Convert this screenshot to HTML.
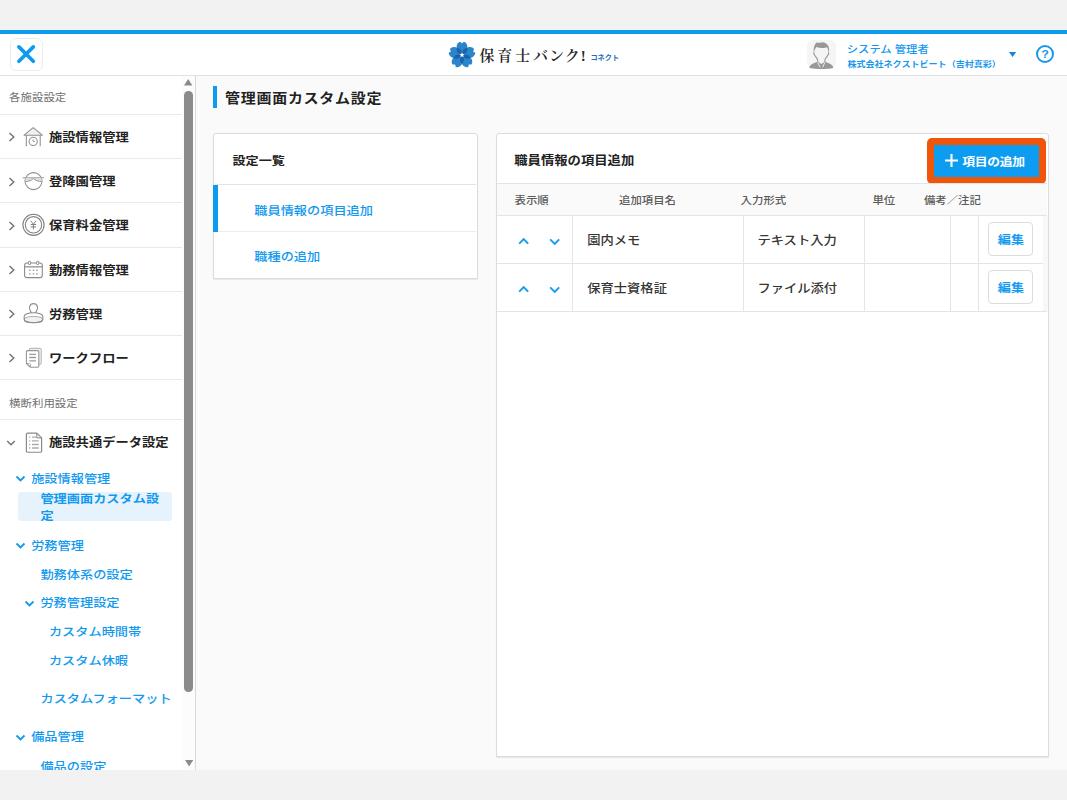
<!DOCTYPE html>
<html lang="ja">
<head>
<meta charset="utf-8">
<title>管理画面カスタム設定 | 保育士バンク! コネクト</title>
<style>
*{box-sizing:border-box;margin:0;padding:0}
html,body{width:1067px;height:800px;overflow:hidden;background:#f2f2f2}
body{position:relative;font-family:"Liberation Sans","Noto Sans CJK JP",sans-serif;color:#222;-webkit-font-smoothing:antialiased}
.abs{position:absolute}
.t{position:absolute;white-space:nowrap;line-height:1}
.t,.sec,.mi,.bl,.th,.td{transform:scaleY(.9);transform-origin:50% 45%}
.edit span{display:inline-block;transform:scaleY(.9);transform-origin:50% 45%}
#app{position:absolute;left:0;top:30px;width:1067px;height:740px;background:#fafafa;overflow:hidden}
#w{position:absolute;left:0;top:-30px;width:1067px;height:800px}
#topbar{position:absolute;left:0;top:30px;width:1067px;height:3.6px;background:#0c9bee}
#header{position:absolute;left:0;top:33.6px;width:1067px;height:42.4px;background:#fff;border-bottom:1px solid #e0e0e0}
#side{position:absolute;left:0;top:76px;width:196px;height:694px;background:#fff;border-right:1px solid #d9d9d9}
.sdiv{position:absolute;left:0;width:182px;height:1px;background:#eaeaea}
.sec{position:absolute;left:9.1px;font-size:11.45px;color:#707070;white-space:nowrap;line-height:1}
.mi{position:absolute;left:49px;font-size:13.3px;font-weight:700;color:#222;white-space:nowrap;line-height:1}
.bl{position:absolute;font-size:13.2px;font-weight:500;color:#1199f0;white-space:nowrap;line-height:1}
.card{position:absolute;background:#fff;border:1px solid #dcdcdc;border-radius:3px 3px 1px 1px;box-shadow:0 1px 1px rgba(0,0,0,.08)}
.hl{position:absolute;height:1px;background:#e4e4e4}
.vl{position:absolute;width:1px;background:#e4e4e4}
.th{position:absolute;font-size:11.4px;font-weight:500;color:#5a5a5a;white-space:nowrap;line-height:1;top:194.6px}
.td{position:absolute;font-size:13.3px;font-weight:500;color:#363636;white-space:nowrap;line-height:1}
.edit{position:absolute;left:988.3px;width:45.2px;height:34.2px;border:1px solid #dcdcdc;border-radius:4px;background:#fff;color:#149bf1;font-weight:700;font-size:13.1px;line-height:32px;padding-top:2.2px;text-align:center}
</style>
</head>
<body>
<div id="app"><div id="w">
  <div id="topbar"></div>

  <!-- ===== header ===== -->
  <div id="header"></div>
  <!-- close button -->
  <div class="abs" style="left:9.5px;top:37.5px;width:33.5px;height:33.5px;border:1.8px solid #ececec;border-radius:6px;background:#fff"></div>
  <svg class="abs" style="left:14px;top:41.7px" width="24" height="24" viewBox="0 0 24 24"><path d="M4.9 4.9 L19.300 19.300 M19.300 4.9 L4.9 19.300" stroke="#0c9bee" stroke-width="3.7" stroke-linecap="round" fill="none"/></svg>

  <!-- logo -->
  <svg class="abs" style="left:447.65px;top:41.1px" width="28" height="28" viewBox="-14 -14 28 28">
    <g fill="#2a86c9">
      <g id="ptl"><path d="M0 0 C-3 -1.600 -6 -4.800 -5.300 -9.200 C-4.900 -11.400 -3.400 -12.900 -2 -13.300 L0 -11.700 L2 -13.300 C3.400 -12.900 4.900 -11.400 5.300 -9.200 C6 -4.800 3 -1.600 0 0Z"/></g>
      <use href="#ptl" transform="rotate(72)"/><use href="#ptl" transform="rotate(144)"/><use href="#ptl" transform="rotate(216)"/><use href="#ptl" transform="rotate(288)"/>
    </g>
    <g fill="#1b61ae">
      <defs><path id="ptm" d="M0 -1.300 C-2.800 -3.500 -2.700 -6.300 0 -8.800 C2.700 -6.300 2.800 -3.500 0 -1.300Z"/></defs>
      <use href="#ptm" transform="rotate(36)"/><use href="#ptm" transform="rotate(108)"/><use href="#ptm" transform="rotate(180)"/><use href="#ptm" transform="rotate(252)"/><use href="#ptm" transform="rotate(324)"/>
    </g>
    <path d="M0 -2.600 L0.700 -0.900 L2.470 -0.800 L1.100 0.350 L1.530 2.100 L0 1.150 L-1.530 2.100 L-1.100 0.350 L-2.470 -0.800 L-0.700 -0.900Z" fill="#fff"/>
  </svg>
  <div class="t" style="transform:none;left:479.4px;top:49.3px;font-family:'Liberation Serif','Noto Serif CJK SC',serif;font-size:15px;font-weight:600;color:#262626"><span style="letter-spacing:2.9px">保育士</span><span style="letter-spacing:1px">バンク</span>!</div>
  <div class="t" style="transform:none;left:590.4px;top:53.800px;font-size:7.2px;font-weight:700;color:#2a6fb5">コネクト</div>

  <!-- user -->
  <div class="abs" style="left:806.75px;top:39.8px;width:29.3px;height:29.5px;border-radius:6px;background:#f5f5f5;overflow:hidden">
    <svg width="29.3" height="29.5" viewBox="0 0 29.3 29.5">
      <path d="M6.800 13.400 C6.300 9 6.900 4.800 9.500 2.400 C11 2.900 12.500 2.700 14.500 2.400 C18.500 1.800 21.800 5 22.100 9 C22.200 10.800 22 12.200 21.700 13.300 C21.500 11 21 8.800 19.900 7.200 C16.500 8.400 12.500 8.300 9.500 7.100 C8.100 8.700 7.300 11 6.800 13.400Z" fill="#989898"/>
      <path d="M7.300 12.300 C6.700 12.900 6.700 13.900 7.300 14.600 C8.200 16.400 9.300 17.600 10.200 18.800 C10.800 19.800 10.800 21 10.800 22 M21.300 12.300 C21.900 12.900 21.900 13.900 21.300 14.600 C20.400 16.400 19.300 17.600 18.400 18.800 C17.800 19.800 17.800 21 17.800 22" fill="none" stroke="#989898" stroke-width="1.15"/>
      <path d="M2.500 27.600 C2.500 25 6 23.300 10.800 21.800 L14.300 23.900 L17.800 21.800 C22.600 23.300 26.100 25 26.100 27.600 C26.100 28.700 24 29 14.300 29 C4.600 29 2.500 28.700 2.500 27.600Z" fill="#989898"/>
      <path d="M10.700 22.400 L13.100 27.300 M17.900 22.400 L15.600 27.300" stroke="#f5f5f5" stroke-width=".95" fill="none"/>
    </svg>
  </div>
  <div class="t" style="left:846.8px;top:44.2px;font-size:11.3px;font-weight:500;color:#1798ee">システム 管理者</div>
  <div class="t" style="left:847.4px;top:59.8px;font-size:9.05px;font-weight:700;color:#1798ee">株式会社ネクストビート（吉村真彩）</div>
  <svg class="abs" style="left:1009.4px;top:52px" width="7.2" height="5" viewBox="0 0 7.2 5"><path d="M0 0H7.2L3.6 5Z" fill="#1a84dc"/></svg>
  <div class="abs" style="left:1036.1px;top:45px;width:18.2px;height:18.2px;border:2px solid #1798ee;border-radius:50%"></div>
  <div class="t" style="left:1036.1px;top:48.3px;width:18.2px;text-align:center;font-size:12.5px;font-weight:700;color:#1798ee">?</div>

  <!-- ===== sidebar ===== -->
  <div id="side"></div>
  <div class="sec" style="top:92.4px">各施設設定</div>
  <div class="sdiv" style="top:114px"></div>
  <div class="sdiv" style="top:158px"></div>
  <div class="sdiv" style="top:202px"></div>
  <div class="sdiv" style="top:246.6px"></div>
  <div class="sdiv" style="top:291px"></div>
  <div class="sdiv" style="top:335px"></div>
  <div class="sdiv" style="top:379px"></div>
  <div class="sdiv" style="top:419px"></div>

  <!-- chevrons > -->
  <svg class="abs" style="left:8.05px;top:131.25px" width="8" height="12" viewBox="0 0 8 12"><path d="M1.500 2 L5.800 6 L1.500 10" stroke="#707070" stroke-width="1.35" fill="none"/></svg>
  <svg class="abs" style="left:8.05px;top:175.55px" width="8" height="12" viewBox="0 0 8 12"><path d="M1.500 2 L5.800 6 L1.500 10" stroke="#707070" stroke-width="1.35" fill="none"/></svg>
  <svg class="abs" style="left:8.05px;top:219.90px" width="8" height="12" viewBox="0 0 8 12"><path d="M1.500 2 L5.800 6 L1.500 10" stroke="#707070" stroke-width="1.35" fill="none"/></svg>
  <svg class="abs" style="left:8.05px;top:264.25px" width="8" height="12" viewBox="0 0 8 12"><path d="M1.500 2 L5.800 6 L1.500 10" stroke="#707070" stroke-width="1.35" fill="none"/></svg>
  <svg class="abs" style="left:8.05px;top:308.45px" width="8" height="12" viewBox="0 0 8 12"><path d="M1.500 2 L5.800 6 L1.500 10" stroke="#707070" stroke-width="1.35" fill="none"/></svg>
  <svg class="abs" style="left:8.05px;top:352.40px" width="8" height="12" viewBox="0 0 8 12"><path d="M1.500 2 L5.800 6 L1.500 10" stroke="#707070" stroke-width="1.35" fill="none"/></svg>
  <svg class="abs" style="left:5.25px;top:438.65px" width="12" height="8" viewBox="0 0 12 8"><path d="M2.200 2.100 L6 5.800 L9.800 2.100" stroke="#707070" stroke-width="1.35" fill="none"/></svg>

  <svg class="abs" style="left:0;top:0" width="60" height="470" viewBox="0 0 60 470" fill="none" stroke="#8a8a8a" stroke-width="1.1">
    <!-- house / clock -->
    <g stroke="#8e8e8e" stroke-width="1.05">
    <path d="M33.2 127.600 L42.300 135.200 H24.100Z" fill="#f1f1f1" stroke-linejoin="round"/>
    <path d="M26.3 135.200 V146.300 M40.2 135.200 V146.300"/>
    <circle cx="33.2" cy="141.4" r="4.1"/>
    <path d="M33.100 139.200 V141.500 H35" stroke-width=".9" stroke="#9a9a9a"/>
    </g>
    <!-- cap -->
    <circle cx="33.5" cy="181.1" r="8.5" stroke="#8e8e8e" stroke-width="1.05"/>
    <path d="M25.800 177.600 H41.200 L41.800 180.800 C38 181 35 180 33.500 178.300 C32 180 29 181 25.200 180.800Z" fill="#f7f7f7" stroke="none"/>
    <path d="M22.5 177.750 H44.150" stroke-width="1.1" stroke="#a6a6a6"/>
    <path d="M25.2 181.300 C29 181.500 32 180.200 33.500 178.400 C35 180.200 38 181.500 41.800 181.300" stroke-width="1"/>
    <path d="M25.100 179.500 C28.500 179.700 31.500 179.100 33.500 178.100 C35.500 179.100 38.500 179.700 41.900 179.500" stroke="#c8c8c8" stroke-width=".7"/>
    <!-- yen coin -->
    <circle cx="33.5" cy="224.8" r="10.6" stroke="#808080"/>
    <circle cx="33.5" cy="224.8" r="8.2" stroke="#808080"/>
    <path d="M30.700 220.800 L33.400 224.200 L36.100 220.800 M33.400 224.200 V229.400 M30.700 224.500 H36.100 M30.700 226.900 H36.100" stroke="#808080" stroke-width="1"/>
    <!-- calendar -->
    <rect x="24.6" y="263" width="17.7" height="14.6" rx="2.4"/>
    <path d="M24.800 266.800 H42.100" stroke-width="1.5" stroke="#a0a0a0"/>
    <rect x="28.4" y="261.300" width="2.2" height="3.3" rx=".8" fill="#fff" stroke-width="1"/>
    <rect x="36.6" y="261.300" width="2.2" height="3.3" rx=".8" fill="#fff" stroke-width="1"/>
    <g fill="#999" stroke="none"><rect x="29.1" y="269.600" width="1.4" height="1.4"/><rect x="32.8" y="269.600" width="1.4" height="1.4"/><rect x="36.200" y="269.600" width="1.4" height="1.4"/><rect x="29.1" y="273.200" width="1.4" height="1.4"/><rect x="32.8" y="273.200" width="1.4" height="1.4"/><rect x="36.200" y="273.200" width="1.4" height="1.4"/></g>
    <!-- stamp -->
    <path d="M31.300 313 L30.500 310.700 C28.600 308.500 29.200 303.600 33.500 303.600 C37.800 303.600 38.400 308.500 36.500 310.700 L35.700 313" stroke="#909090"/>
    <ellipse cx="33.5" cy="319.500" rx="9.200" ry="3.100" fill="#f1f1f1" stroke="#a5a5a5" stroke-width=".9"/>
    <path d="M24.200 316.300 C24.200 314.300 28.400 312.800 33.500 312.800 C38.600 312.800 42.800 314.300 42.800 316.300 V319.400 C42.800 321.300 38.600 322.700 33.500 322.700 C28.400 322.700 24.200 321.300 24.200 319.400Z"/>
    <!-- docs -->
    <rect x="29.250" y="348.400" width="12" height="15.750" rx="1.3" fill="#efefef" stroke="#bdbdbd"/>
    <path d="M27.600 350.650 H37.600 A1.200 1.200 0 0 1 38.800 351.850 V366.050 A1.200 1.200 0 0 1 37.600 367.250 H30.500 L26.400 363.500 V351.850 A1.200 1.200 0 0 1 27.600 350.650Z" fill="#fff" stroke="#959595" stroke-linejoin="round"/>
    <path d="M26.600 363.600 H29.600 A.9 .9 0 0 1 30.500 364.500 V367.100" stroke="#a5a5a5" stroke-width=".9"/>
    <path d="M29.250 354.300 H36 M29.250 357.500 H36 M29.250 360.950 H36" stroke="#9c9c9c" stroke-width="1.3"/>
    <!-- list doc -->
    <path d="M27.600 433.100 H36.800 L41.600 437.900 V451.050 A1.200 1.200 0 0 1 40.400 452.250 H27.600 A1.200 1.200 0 0 1 26.400 451.050 V434.300 A1.200 1.200 0 0 1 27.600 433.100Z" stroke="#8a8a8a" stroke-width="1.2" stroke-linejoin="round"/>
    <path d="M36.800 433.300 V437.900 H41.400" stroke="#858585" stroke-width="1"/>
    <path d="M29 437.200 H30.200 M32 437.200 H36.200 M29 440.900 H30.200 M32 440.900 H38.800 M29 444.500 H30.200 M32 444.500 H38.800 M29 448 H30.200 M32 448 H38.800" stroke="#ababab" stroke-width="1.3"/>
  </svg>

  <div class="mi" style="top:131.9px">施設情報管理</div>
  <div class="mi" style="top:176.2px">登降園管理</div>
  <div class="mi" style="top:220.4px">保育料金管理</div>
  <div class="mi" style="top:264.7px">勤務情報管理</div>
  <div class="mi" style="top:308.9px">労務管理</div>
  <div class="mi" style="top:353.2px">ワークフロー</div>
  <div class="sec" style="top:398px">横断利用設定</div>
  <div class="mi" style="top:436.55px">施設共通データ設定</div>

  <!-- blue tree -->
  <svg class="abs" style="left:15px;top:475.1px" width="11" height="8" viewBox="0 0 11 8"><path d="M1.500 1.500 L5.500 5.500 L9.500 1.500" stroke="#1798ee" stroke-width="1.8" fill="none"/></svg>
  <div class="bl" style="left:31.2px;top:472.75px">施設情報管理</div>
  <div class="abs" style="left:18.2px;top:492.3px;width:153.8px;height:28.7px;background:#e6f3fd;border-radius:3px"></div>
  <div class="bl" style="left:40.4px;top:492.7px;font-weight:700">管理画面カスタム設</div>
  <div class="bl" style="left:40.4px;top:509.8px;font-weight:700">定</div>

  <svg class="abs" style="left:15px;top:542.25px" width="11" height="8" viewBox="0 0 11 8"><path d="M1.500 1.500 L5.500 5.500 L9.500 1.500" stroke="#1798ee" stroke-width="1.8" fill="none"/></svg>
  <div class="bl" style="left:31.2px;top:539.55px">労務管理</div>
  <div class="bl" style="left:40.4px;top:568.75px">勤務体系の設定</div>
  <svg class="abs" style="left:23.85px;top:599.6px" width="11" height="8" viewBox="0 0 11 8"><path d="M1.500 1.500 L5.500 5.500 L9.500 1.500" stroke="#1798ee" stroke-width="1.8" fill="none"/></svg>
  <div class="bl" style="left:40.4px;top:597.45px">労務管理設定</div>
  <div class="bl" style="left:48.9px;top:626.35px">カスタム時間帯</div>
  <div class="bl" style="left:48.9px;top:655.25px">カスタム休暇</div>
  <div class="bl" style="left:40.5px;top:693.45px">カスタムフォーマット</div>
  <svg class="abs" style="left:14.65px;top:733.6px" width="11" height="8" viewBox="0 0 11 8"><path d="M1.500 1.500 L5.500 5.500 L9.500 1.500" stroke="#1798ee" stroke-width="1.8" fill="none"/></svg>
  <div class="bl" style="left:31.2px;top:731.15px">備品管理</div>
  <div class="bl" style="left:40.4px;top:760.55px">備品の設定</div>

  <!-- scrollbar -->
  <div class="abs" style="left:182px;top:76px;width:13px;height:694px;background:#fcfcfc"></div>
  <svg class="abs" style="left:184.2px;top:79.4px" width="8.4" height="6.4" viewBox="0 0 8.4 6.4"><path d="M4.2 0 L8.4 6.4 H0Z" fill="#8a8a8a"/></svg>
  <div class="abs" style="left:184.4px;top:91px;width:8.5px;height:600.9px;border-radius:4.25px;background:#8b8b8b"></div>
  <svg class="abs" style="left:184.6px;top:760.3px" width="8.2" height="6.6" viewBox="0 0 8.2 6.6"><path d="M0 0 H8.2 L4.1 6.6Z" fill="#8b8b8b"/></svg>

  <!-- ===== main ===== -->
  <div class="abs" style="left:213.2px;top:86.4px;width:3.8px;height:22px;background:#0c9bee"></div>
  <div class="t" style="left:225px;top:91.2px;font-size:15px;font-weight:700;letter-spacing:.72px;color:#222">管理画面カスタム設定</div>

  <!-- left card -->
  <div class="card" style="left:213.4px;top:133px;width:264.4px;height:145.8px"></div>
  <div class="t" style="left:232.5px;top:154.7px;font-size:13.1px;font-weight:700;color:#222">設定一覧</div>
  <div class="hl" style="left:214.5px;top:184.2px;width:261.8px"></div>
  <div class="hl" style="left:214.5px;top:231px;width:261.8px;background:#ececec"></div>
  <div class="abs" style="left:213.4px;top:184.6px;width:4.3px;height:47.2px;background:#0c9bee"></div>
  <div class="bl" style="left:254.3px;top:204.9px">職員情報の項目追加</div>
  <div class="bl" style="left:254.3px;top:250.6px">職種の追加</div>

  <!-- right card -->
  <div class="card" style="left:496.2px;top:133.2px;width:552.8px;height:624px"></div>
  <div class="t" style="left:514.2px;top:154.2px;font-size:13.35px;font-weight:700;color:#222">職員情報の項目追加</div>

  <!-- add button with orange highlight -->
  <div class="abs" style="left:927.3px;top:137.8px;width:119px;height:46.2px;border-radius:5px;background:#f05609"></div>
  <div class="abs" style="left:934.2px;top:145.2px;width:104.8px;height:31.5px;background:#0c9df2"></div>
  <svg class="abs" style="left:944.5px;top:154.4px" width="13" height="13" viewBox="0 0 13 13"><path d="M6.5 0V13M0 6.5H13" stroke="#fff" stroke-width="2.1" fill="none"/></svg>
  <div class="t" style="left:962.2px;top:156px;font-size:12.800px;font-weight:700;letter-spacing:-.3px;color:#fff">項目の追加</div>

  <!-- table -->
  <div class="abs" style="left:497.2px;top:183.7px;width:550.2px;height:32px;background:#fafafa"></div>
  <div class="hl" style="left:497.2px;top:183.2px;width:550.2px"></div>
  <div class="hl" style="left:497.2px;top:215.4px;width:550.2px"></div>
  <div class="hl" style="left:497.2px;top:263.2px;width:550.2px"></div>
  <div class="hl" style="left:497.2px;top:311px;width:550.2px"></div>
  <div class="vl" style="left:572.4px;top:215.4px;height:95.6px"></div>
  <div class="vl" style="left:743.3px;top:215.4px;height:95.6px"></div>
  <div class="vl" style="left:863.7px;top:215.4px;height:95.6px"></div>
  <div class="vl" style="left:950.3px;top:215.4px;height:95.6px"></div>
  <div class="vl" style="left:978.1px;top:215.4px;height:95.6px"></div>

  <div class="abs" style="left:1042.600px;top:216px;width:5px;height:95px;background:#f8f8f8"></div>
  <div class="th" style="left:514.5px">表示順</div>
  <div class="th" style="left:619px">追加項目名</div>
  <div class="th" style="left:740.6px">入力形式</div>
  <div class="th" style="left:872.4px">単位</div>
  <div class="th" style="left:923.9px">備考／注記</div>

  <!-- row 1 -->
  <svg class="abs" style="left:518.2px;top:237.1px" width="11.4" height="8" viewBox="0 0 11.4 8"><path d="M1.2 6.6 L5.7 2 L10.2 6.6" stroke="#149bf1" stroke-width="1.9" fill="none"/></svg>
  <svg class="abs" style="left:549px;top:237.8px" width="11.4" height="8" viewBox="0 0 11.4 8"><path d="M1.2 1.4 L5.7 6 L10.2 1.4" stroke="#149bf1" stroke-width="1.9" fill="none"/></svg>
  <div class="td" style="left:587.2px;top:235.1px">園内メモ</div>
  <div class="td" style="left:757.4px;top:235.1px">テキスト入力</div>
  <div class="edit" style="top:222.3px"><span>編集</span></div>
  <!-- row 2 -->
  <svg class="abs" style="left:518.2px;top:284.9px" width="11.4" height="8" viewBox="0 0 11.4 8"><path d="M1.2 6.6 L5.7 2 L10.2 6.6" stroke="#149bf1" stroke-width="1.9" fill="none"/></svg>
  <svg class="abs" style="left:549px;top:285.6px" width="11.4" height="8" viewBox="0 0 11.4 8"><path d="M1.2 1.4 L5.7 6 L10.2 1.4" stroke="#149bf1" stroke-width="1.9" fill="none"/></svg>
  <div class="td" style="left:587.2px;top:282.9px">保育士資格証</div>
  <div class="td" style="left:757.4px;top:282.9px">ファイル添付</div>
  <div class="edit" style="top:270.1px"><span>編集</span></div>
</div></div>
</body>
</html>
